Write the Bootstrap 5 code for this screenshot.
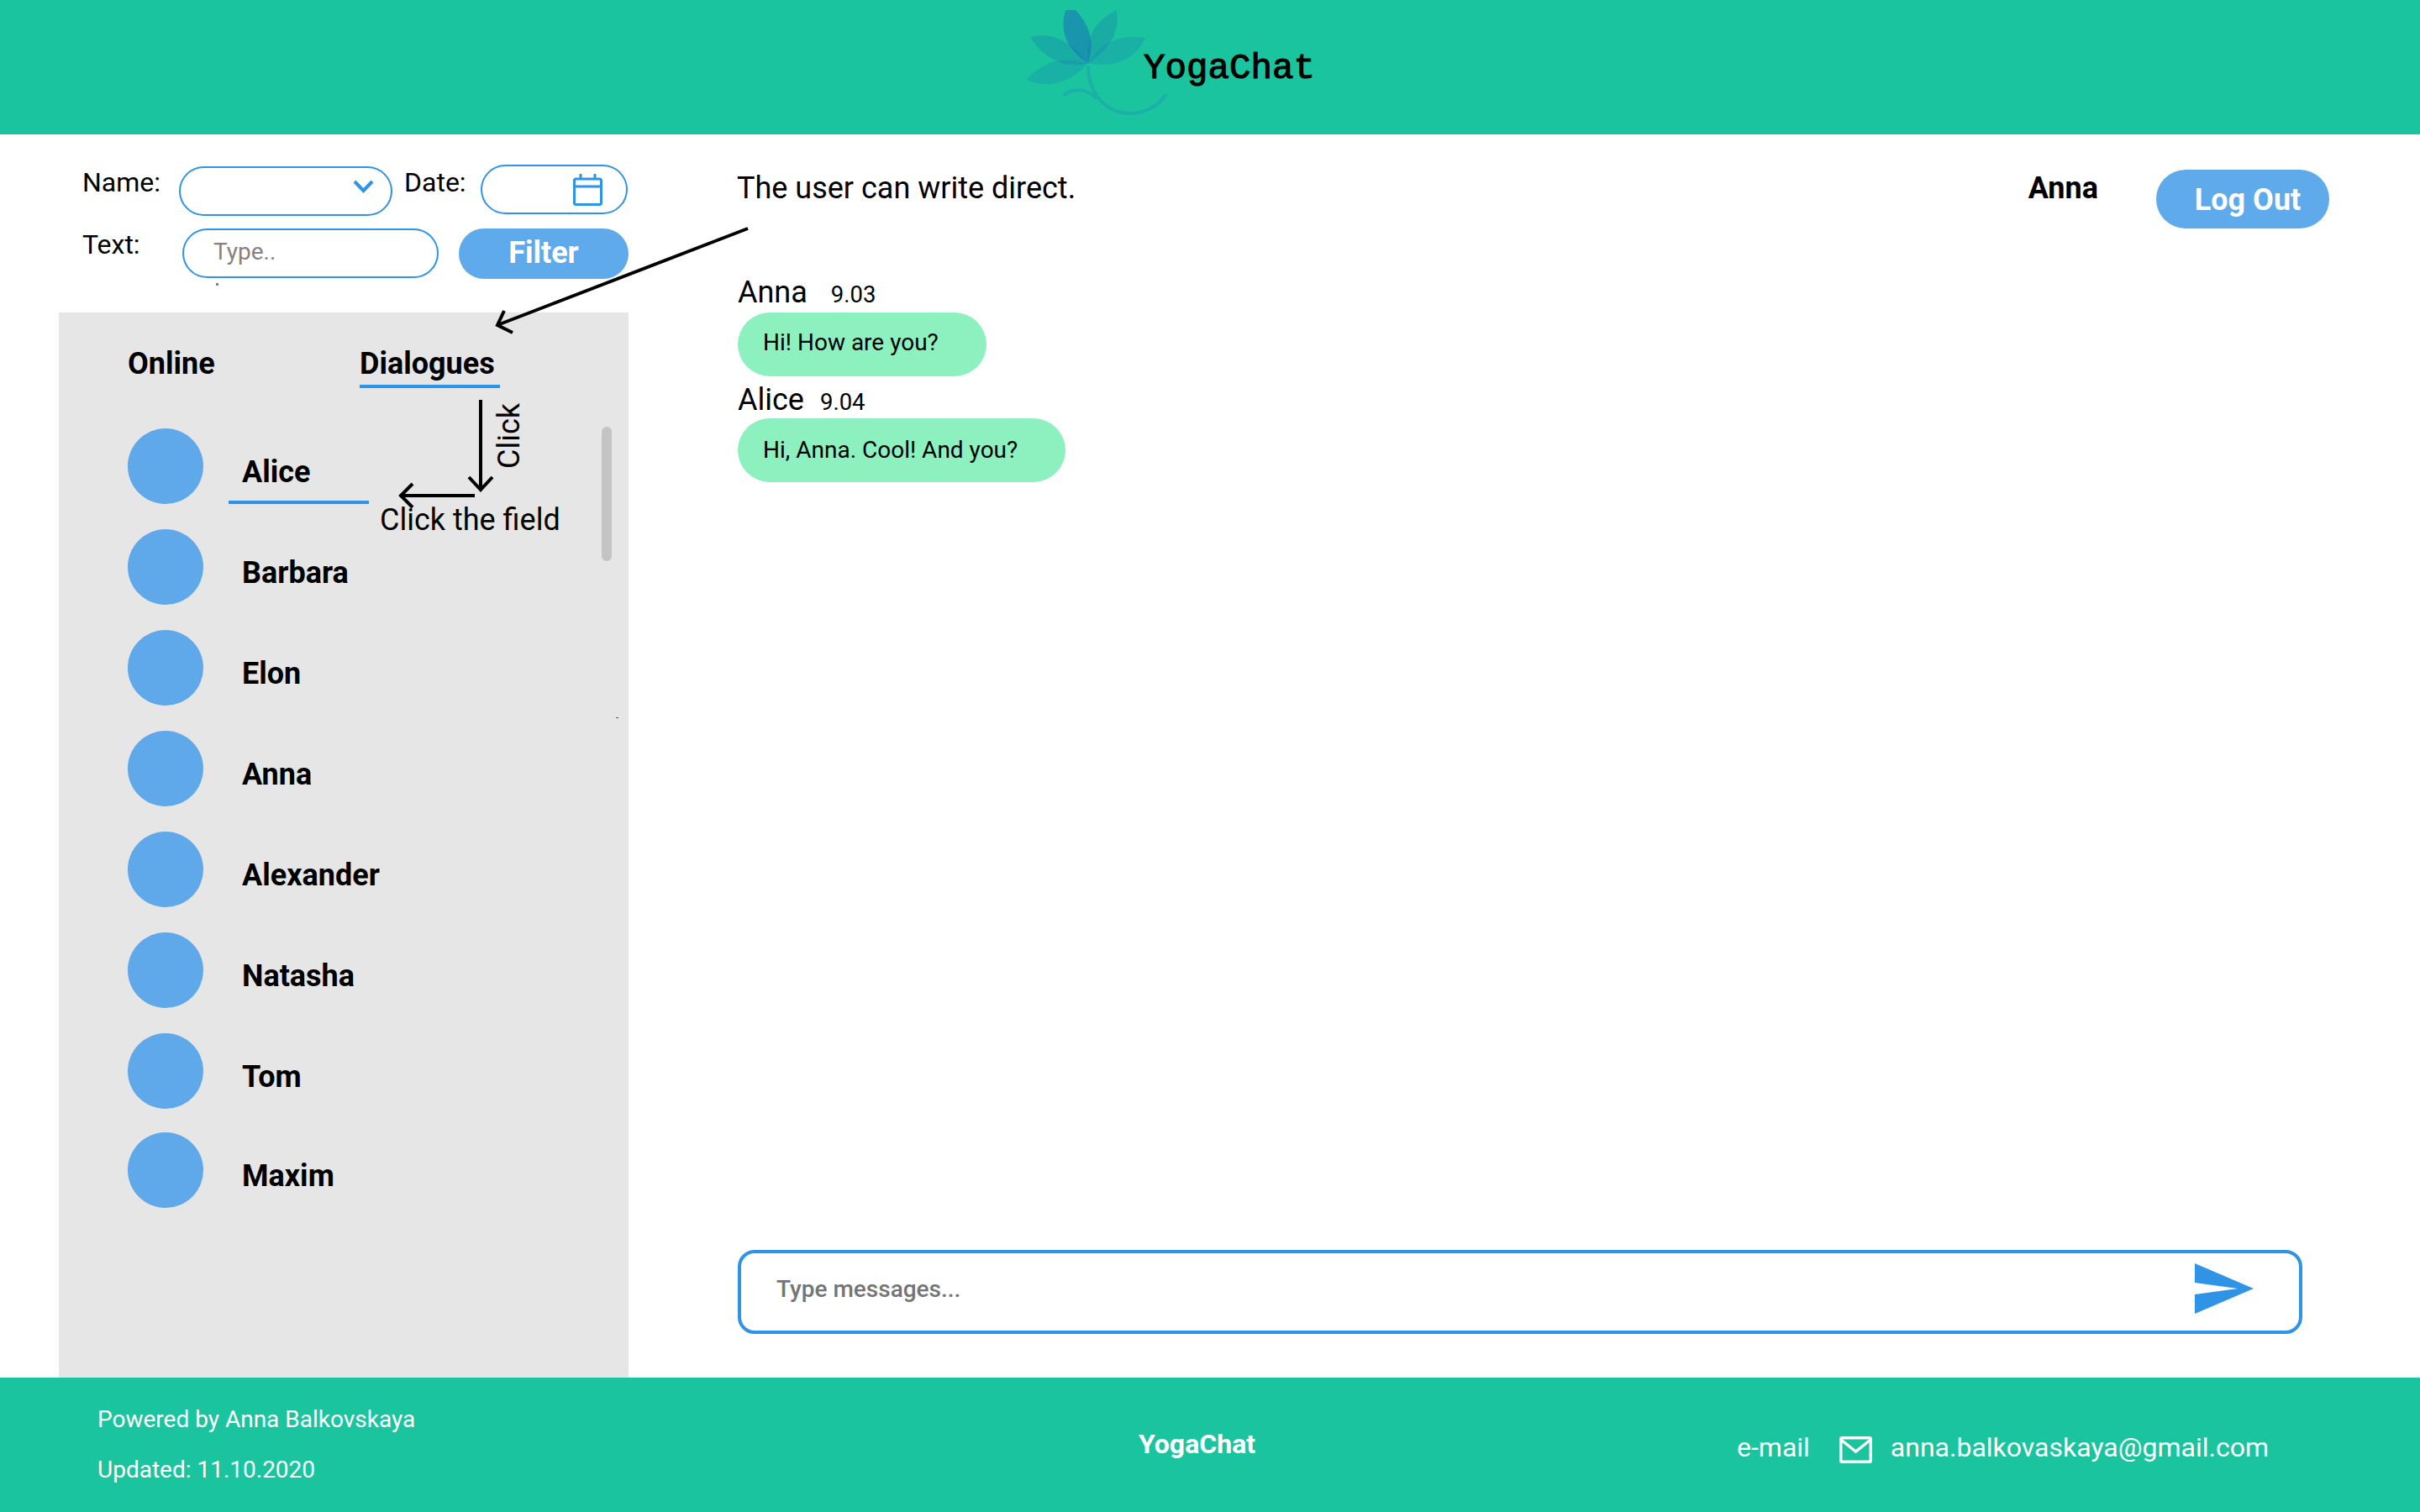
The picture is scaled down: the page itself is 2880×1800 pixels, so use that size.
<!DOCTYPE html>
<html lang="en">
<head>
    <meta charset="UTF-8">
    <meta name="viewport" content="width=device-width, initial-scale=1.0">
    <title>YogaChat</title>
    <link href="https://cdn.jsdelivr.net/npm/bootstrap@5.3.3/dist/css/bootstrap.min.css" rel="stylesheet">
    <style>
        body {
            font-family: Roboto, "Liberation Sans", sans-serif;
            font-size: 36px;
            line-height: 42px;
            color: #000;
            background: #fff;
        }
        .yc-page { height: 1800px; width: 2880px; overflow: hidden; }
        .yc-top { height: 160px; background: #1ac49f; padding-left: 1220px; flex: none; }
        .yc-logo-text {
            font-family: "Liberation Mono", monospace;
            font-size: 42.5px;
            font-weight: 400;
            -webkit-text-stroke: 1.1px #000;
            margin-left: -29px;
            margin-top: 4px;
        }
        .yc-middle { flex: 1; min-height: 0; }

        /* left column */
        .yc-left { width: 748px; flex: none; }
        .yc-filter { padding: 36px 0 40px 98px; font-size: 32px; }
        .yc-lbl-name { width: 115px; }
        .yc-lbl-date { width: 91px; margin-left: 14px; }
        .yc-lbl-text { width: 119px; margin-top: -2px; }
        .yc-field {
            border: 2px solid #2f93e6;
            border-radius: 30px;
            height: 59px;
            background: #fff;
        }
        .yc-select { width: 254px; margin-top: 2px; padding-right: 20px; }
        .yc-select svg { margin-bottom: 12px; }
        .yc-date { width: 175px; padding-right: 28px; }
        .yc-row2 { margin-top: 15px; }
        .yc-input {
            width: 305px;
            padding: 0 0 5px 35px;
            font-size: 28px;
            box-shadow: none;
        }
        .yc-input::placeholder { color: #8a8080; }
        .yc-filter-btn {
            width: 202px;
            height: 60px;
            margin-left: 24px;
            padding: 0 0 2px;
            border: 0;
            font-size: 36px;
            font-weight: 700;
            line-height: 42px;
            color: #fff;
            background: #5faaeb;
        }
        .yc-side {
            flex: 1;
            margin-left: 70px;
            padding: 40px 0 0 82px;
            background: #e6e6e6;
        }
        .yc-tab-online { width: 276px; }
        .yc-tab-dialogues { width: 167px; padding-bottom: 4px; border-bottom: 4px solid #2f93e6; }
        .yc-users { margin-top: 33px; }
        .yc-user { height: 120px; }
        .yc-user:last-child { margin-top: -2px; }
        .yc-avatar { width: 90px; height: 90px; background: #5fa8e9; flex: none; }
        .yc-name { margin: 14px 0 0 46px; }
        .yc-name-active::after {
            content: "";
            position: absolute;
            left: -16px;
            top: 55px;
            width: 167px;
            height: 4px;
            background: #2f93e6;
        }
        .yc-scroll {
            position: absolute;
            left: 646px;
            top: 136px;
            width: 12px;
            height: 160px;
            border-radius: 6px;
            background: #c4c4c4;
        }
        .yc-note-field { position: absolute; left: 382px; top: 226px; white-space: nowrap; }
        .yc-note-click {
            position: absolute;
            left: 515px;
            top: 108px;
            writing-mode: vertical-rl;
            transform: rotate(180deg);
        }
        .yc-speck-a { position: absolute; left: 187px; top: -35px; width: 3px; height: 3px; background: #8a8080; }
        .yc-speck-b { position: absolute; left: 663px; top: 482px; width: 3px; height: 1px; background: #555; }

        /* chat column */
        .yc-chat { flex: 1; padding: 42px 140px 52px 130px; min-width: 0; }
        .yc-chat-head { margin-right: -32px; }
        .yc-hint { margin: 1px 0 0 -1px; }
        .yc-me { margin-top: 1px; margin-right: 69px; }
        .yc-logout {
            width: 206px;
            height: 70px;
            padding: 2px 0 0 12px;
            border: 0;
            font-size: 36px;
            font-weight: 700;
            line-height: 42px;
            color: #fff;
            background: #5faaeb;
        }
        .yc-msgs { margin-top: 55px; }
        .yc-msg-time { font-size: 27.5px; line-height: 1; margin-left: 28px; }
        .yc-msg-time-b { margin-left: 19px; }
        .yc-bubble {
            height: 76px;
            margin: 3px 0 7px;
            padding: 0 50px 4px 30px;
            font-size: 28px;
            background: #8cf1bf;
        }
        .yc-bubble-a { width: 296px; }
        .yc-bubble-b { width: 390px; margin-top: 1px; padding-bottom: 0; }
        .yc-send {
            height: 100px;
            border: 4px solid #2f93e6;
            border-radius: 20px;
            padding: 0 54px 0 42px;
        }
        .yc-send svg { margin-bottom: 8px; }
        .yc-send-input {
            padding: 0 0 6px;
            border: 0;
            font-size: 28px;
            font-weight: 500;
            box-shadow: none;
        }
        .yc-send-input::placeholder { color: #757575; }

        /* footer */
        .yc-bottom { height: 160px; flex: none; background: #1ac49f; color: #fff; padding-left: 116px; }
        .yc-foot-left { width: 1239px; font-size: 28px; padding-top: 29px; }
        .yc-foot-left div + div { margin-top: 18px; }
        .yc-foot-mid { width: 712px; font-size: 32px; font-weight: 700; padding-top: 58px; }
        .yc-foot-right { font-size: 32px; padding-top: 62px; }
        .yc-mail-icon { margin: 8px 22px 0 35px; }
        .yc-arrows { pointer-events: none; }
    </style>
</head>
<body>

<div class="yc-page d-flex flex-column position-relative">

    <header class="yc-top d-flex align-items-center">
        <svg width="170" height="160" viewBox="120 0 510 480" class="flex-none">
            <g fill="#1a6fb8">
                <path fill-opacity=".24" d="M345 225C220 190 160 250 125 283C190 320 280 300 345 225Z"/>
                <path fill-opacity=".28" d="M345 225C260 120 190 120 140 132C175 205 270 250 345 225Z"/>
                <path fill-opacity=".24" d="M345 225C400 135 480 125 550 135C510 220 420 245 345 225Z"/>
                <path fill-opacity=".28" d="M345 225C335 130 370 75 445 36C462 100 430 170 345 225Z"/>
                <path fill-opacity=".55" d="M345 225C270 180 240 110 265 36H300C350 90 370 150 345 225Z"/>
            </g>
            <g fill="none" stroke="#1bb0a8" stroke-width="12" stroke-linecap="round">
                <path d="M345 240C345 320 400 405 495 405C550 405 600 375 620 340"/>
                <path d="M262 337C290 315 340 315 372 350"/>
            </g>
        </svg>
        <div class="yc-logo-text">YogaChat</div>
    </header>

    <main class="yc-middle d-flex">
        <section class="yc-left d-flex flex-column">
            <form class="yc-filter">
                <div class="d-flex align-items-start">
                    <label class="yc-lbl-name">Name:</label>
                    <div class="yc-field yc-select d-flex align-items-center justify-content-end">
                        <svg width="25" height="16" viewBox="0 0 25 16"><polyline points="2,2 12.5,13 23,2" fill="none" stroke="#2f93e6" stroke-width="4"/></svg>
                    </div>
                    <label class="yc-lbl-date">Date:</label>
                    <div class="yc-field yc-date d-flex align-items-center justify-content-end">
                        <svg width="35" height="38" viewBox="0 0 35 38" fill="none" stroke="#2f93e6" stroke-width="3"><rect x="1.5" y="6" width="32" height="30.5" rx="2"/><path d="M1.5 15H33.5M9 0V6M26 0V6"/></svg>
                    </div>
                </div>
                <div class="d-flex align-items-start yc-row2">
                    <label class="yc-lbl-text">Text:</label>
                    <input type="text" class="form-control rounded-pill yc-field yc-input" placeholder="Type..">
                    <button type="button" class="btn rounded-pill yc-filter-btn">Filter</button>
                </div>
            </form>

            <aside class="yc-side position-relative">
                <span class="yc-speck-a"></span>
                <span class="yc-speck-b"></span>
                <div class="d-flex fw-bold">
                    <div class="yc-tab-online">Online</div>
                    <div class="yc-tab-dialogues">Dialogues</div>
                </div>
                <div class="yc-users" id="users"></div>
                <div class="yc-scroll"></div>
                <span class="yc-note-field">Click the field</span>
                <span class="yc-note-click">Click</span>
            </aside>
        </section>

        <section class="yc-chat d-flex flex-column">
            <div class="yc-chat-head d-flex align-items-start">
                <div class="yc-hint me-auto">The user can write direct.</div>
                <div class="yc-me fw-bold">Anna</div>
                <button type="button" class="btn rounded-pill yc-logout">Log Out</button>
            </div>

            <div class="yc-msgs flex-grow-1">
                <div>Anna<span class="yc-msg-time">9.03</span></div>
                <div class="yc-bubble yc-bubble-a rounded-pill d-flex align-items-center text-nowrap">Hi! How are you?</div>
                <div>Alice<span class="yc-msg-time yc-msg-time-b">9.04</span></div>
                <div class="yc-bubble yc-bubble-b rounded-pill d-flex align-items-center text-nowrap">Hi, Anna. Cool! And you?</div>
            </div>

            <div class="yc-send d-flex align-items-center">
                <input type="text" class="form-control yc-send-input" placeholder="Type messages...">
                <svg width="70" height="60" viewBox="0 0 70 60" class="ms-3 flex-shrink-0"><polygon points="0,0 70,30 0,60 0,37 51,30 0,23" fill="#2f93e6"/></svg>
            </div>
        </section>
    </main>

    <footer class="yc-bottom d-flex">
        <div class="yc-foot-left">
            <div>Powered by Anna Balkovskaya</div>
            <div>Updated: 11.10.2020</div>
        </div>
        <div class="yc-foot-mid">YogaChat</div>
        <div class="yc-foot-right d-flex align-items-start">
            <span>e-mail</span>
            <svg class="yc-mail-icon" width="39" height="32" viewBox="0 0 39 32" fill="none" stroke="#fff" stroke-width="3.5"><rect x="1.75" y="1.75" width="35.5" height="28.5" rx="1.5"/><path d="M2 4L19.5 18L37 4"/></svg>
            <span>anna.balkovaskaya@gmail.com</span>
        </div>
    </footer>

    <svg class="yc-arrows position-absolute top-0 start-0" width="2880" height="1800" fill="none" stroke="#000" stroke-width="4">
        <path d="M890 272L592 387M600 370L592 387L610 396"/>
        <path d="M572 476V583M558 568L572 583L586 568"/>
        <path d="M565 590H478M491 576L477 590L491 604"/>
    </svg>
</div>

<script>
    let names = ["Alice", "Barbara", "Elon", "Anna", "Alexander", "Natasha", "Tom", "Maxim"];
    let list = document.getElementById("users");
    names.forEach((name, index) => {
        let active = index === 0 ? " position-relative yc-name-active" : "";
        list.innerHTML += `
            <div class="yc-user d-flex align-items-center">
                <div class="yc-avatar rounded-circle"></div>
                <div class="yc-name fw-bold${active}">${name}</div>
            </div>
        `;
    });
</script>
<script src="https://cdn.jsdelivr.net/npm/bootstrap@5.3.3/dist/js/bootstrap.bundle.min.js"></script>
</body>
</html>
